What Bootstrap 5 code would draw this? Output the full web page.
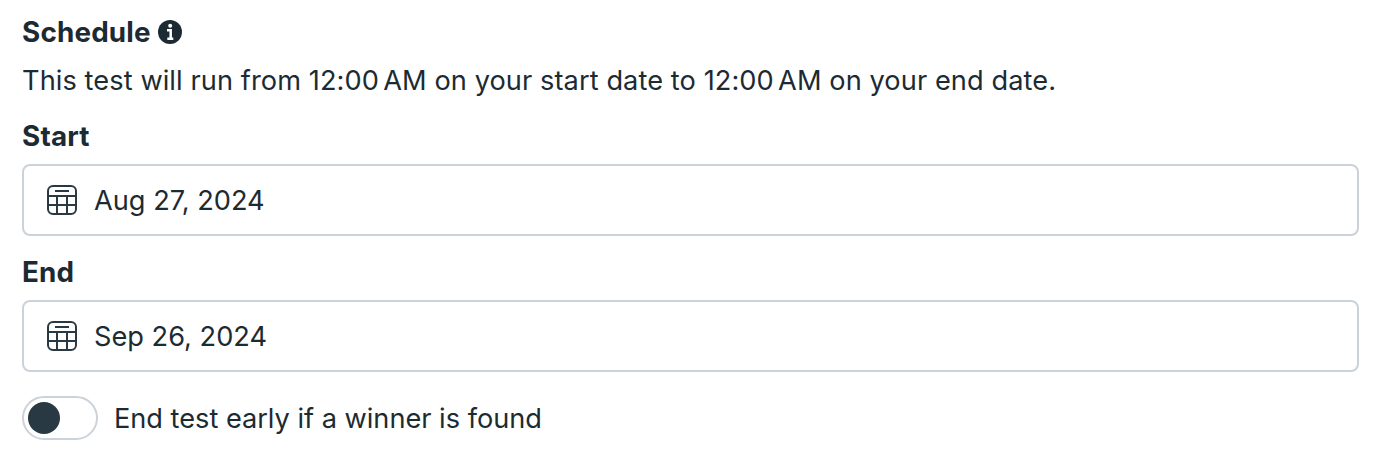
<!DOCTYPE html>
<html lang="en">
<head>
<meta charset="utf-8">
<title>Schedule</title>
<link href="https://cdn.jsdelivr.net/npm/bootstrap@5.3.0/dist/css/bootstrap.min.css" rel="stylesheet">
<style>
body{font-family:Inter,sans-serif;font-size:27.2px;line-height:40px;color:#1c2b33;background:#fff}
.schedule{padding:12px 17px 0 22px}
.line{height:40px;white-space:nowrap}
.sentence,.date-box span,.toggle-label{padding-top:1px}
.sentence{letter-spacing:.08px}
.thin-gap{letter-spacing:-3.4px}
.toggle-label{letter-spacing:-.02px}
.line.fw-bold{font-size:27.8px;letter-spacing:.18px}
.info{margin-left:7px}
.date-box{height:72px;border:2px solid #cbd2d9;border-radius:8px;padding-left:23px;gap:17px}
.toggle{width:76px;height:44px;border:2px solid #cbd2d9;border-radius:22px;padding:4px}
.knob{width:32px;height:32px;background:#283943}
</style>
</head>
<body>
<svg class="d-none">
<symbol id="calendar" viewBox="0 0 30 30"><g fill="none" stroke="#283943" stroke-width="2"><rect x="1" y="1" width="28" height="28" rx="5"/><path d="M8 6h14M1 11h28M1 20h28M10 11v18M20 11v18"/></g></symbol>
</svg>
<main class="schedule">
<div class="line d-flex align-items-center fw-bold"><span>Schedule</span>
<svg class="info" width="24" height="24" viewBox="0 0 24 24"><circle cx="12" cy="12" r="12" fill="#1c2b33"/><circle cx="12.2" cy="5.8" r="2" fill="#fff"/><path d="M9 10.2h3.7V19M9.3 18.7h6" stroke="#fff" stroke-width="2.5" fill="none"/></svg></div>
<div class="line sentence mt-2">This test will run from 12:00<span class="thin-gap">&nbsp;</span>AM on your start date to 12:00<span class="thin-gap">&nbsp;</span>AM on your end date.</div>
<div class="line fw-bold mt-3">Start</div>
<div class="date-box d-flex align-items-center mt-2"><svg width="30" height="30"><use href="#calendar"/></svg><span>Aug 27, 2024</span></div>
<div class="line fw-bold mt-3">End</div>
<div class="date-box d-flex align-items-center mt-2"><svg width="30" height="30"><use href="#calendar"/></svg><span>Sep 26, 2024</span></div>
<div class="d-flex align-items-center mt-4 gap-3"><div class="toggle"><div class="knob rounded-circle"></div></div><span class="toggle-label">End test early if a winner is found</span></div>
</main>
<script src="https://cdn.jsdelivr.net/npm/bootstrap@5.3.0/dist/js/bootstrap.bundle.min.js"></script>
</body>
</html>
